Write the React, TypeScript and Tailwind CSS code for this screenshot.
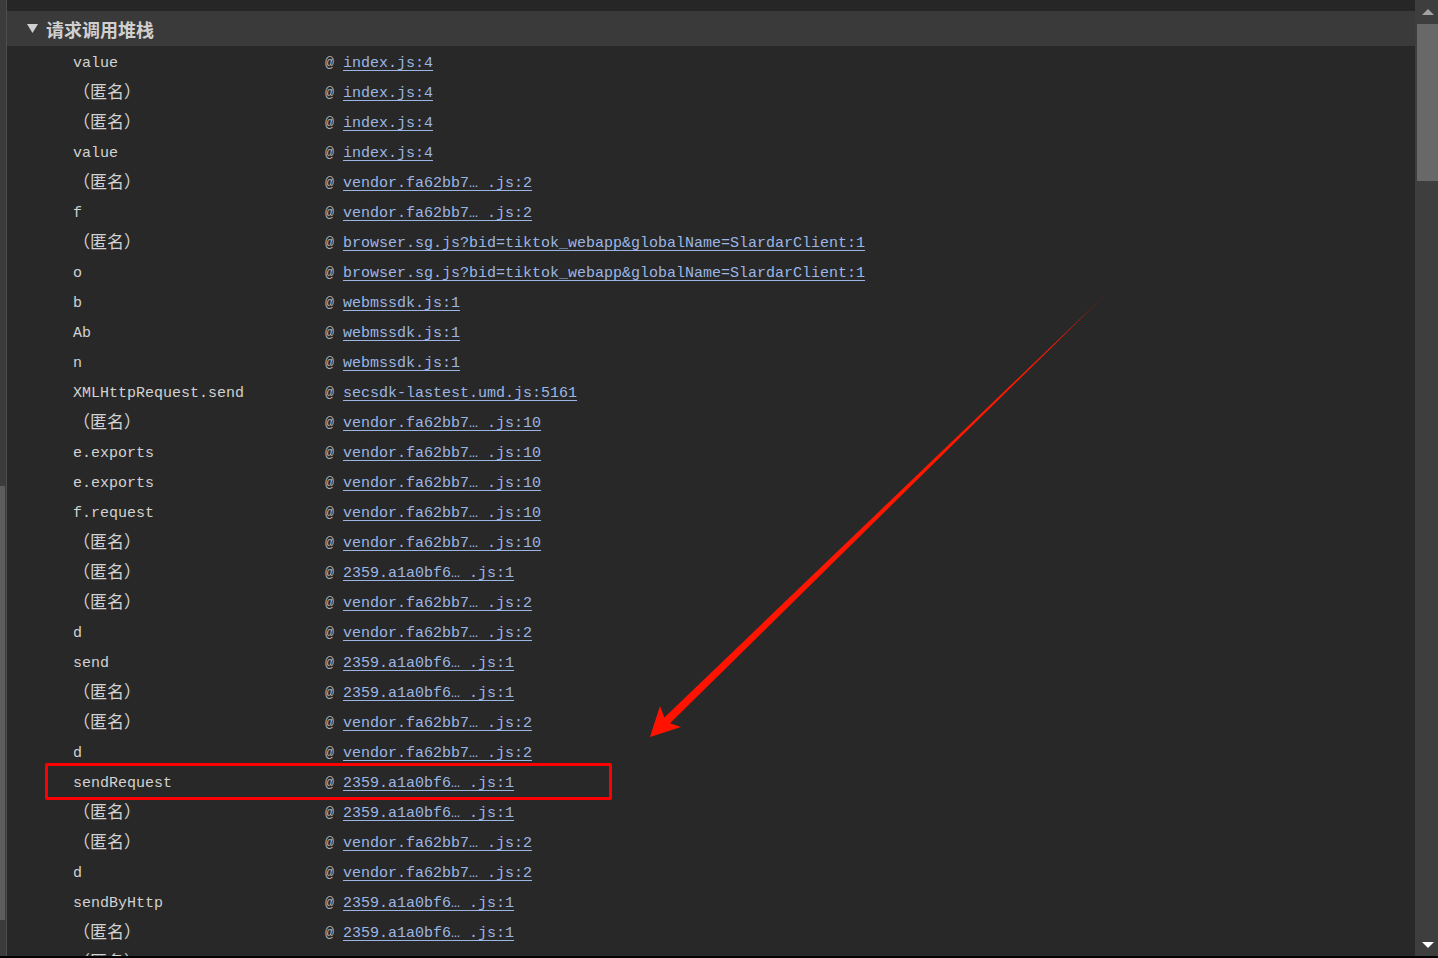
const ANON = '（匿名）'
const IDX = 'index.js:4'
const WEB = 'webmssdk.js:1'
const BROWSER = 'browser.sg.js?bid=tiktok_webapp&globalName=SlardarClient:1'

type Frame = {
  name: string
  file: string
}

const vendor = (line: string) => `vendor.fa62bb7….js:${line}`
const chunk = (line: string) => `2359.a1a0bf6….js:${line}`

const frames: Frame[] = [
  { name: 'value', file: IDX },
  { name: ANON, file: IDX },
  { name: ANON, file: IDX },
  { name: 'value', file: IDX },
  { name: ANON, file: vendor('2') },
  { name: 'f', file: vendor('2') },
  { name: ANON, file: BROWSER },
  { name: 'o', file: BROWSER },
  { name: 'b', file: WEB },
  { name: 'Ab', file: WEB },
  { name: 'n', file: WEB },
  { name: 'XMLHttpRequest.send', file: 'secsdk-lastest.umd.js:5161' },
  { name: ANON, file: vendor('10') },
  { name: 'e.exports', file: vendor('10') },
  { name: 'e.exports', file: vendor('10') },
  { name: 'f.request', file: vendor('10') },
  { name: ANON, file: vendor('10') },
  { name: ANON, file: chunk('1') },
  { name: ANON, file: vendor('2') },
  { name: 'd', file: vendor('2') },
  { name: 'send', file: chunk('1') },
  { name: ANON, file: chunk('1') },
  { name: ANON, file: vendor('2') },
  { name: 'd', file: vendor('2') },
  { name: 'sendRequest', file: chunk('1') },
  { name: ANON, file: chunk('1') },
  { name: ANON, file: vendor('2') },
  { name: 'd', file: vendor('2') },
  { name: 'sendByHttp', file: chunk('1') },
  { name: ANON, file: chunk('1') },
  { name: ANON, file: chunk('1') },
]

const mono = "font-['Liberation_Mono','Noto_Sans_CJK_SC',monospace]"

// the ellipsis is full width in the original font, so pad it out to two cells
function FileLink({ file }: { file: string }) {
  const parts = file.split('…')
  return (
    <a className="text-[#9cb6e4] underline underline-offset-[3px] decoration-1 cursor-pointer whitespace-nowrap">
      {parts[0]}
      {parts.length > 1 ? <><span className="tracking-[9px]">…</span>{parts[1]}</> : ''}
    </a>
  )
}

function FrameRow({ frame }: { frame: Frame }) {
  const anon = frame.name === ANON
  return (
    <div className="h-[30px] flex items-center">
      <div className={`w-[318px] pl-[66px] shrink-0 text-[#d2d2d2] whitespace-nowrap ${anon ? 'text-[17px]' : 'text-[15px]'}`}>
        {frame.name}
      </div>
      <div className="text-[15px] whitespace-nowrap">
        <span className="text-[#b4b4b4]">@ </span>
        <FileLink file={frame.file} />
      </div>
    </div>
  )
}

function Arrow() {
  return (
    <svg className="absolute left-0 top-0 pointer-events-none" width="1438" height="958" viewBox="0 0 1438 958">
      <defs>
        <linearGradient id="shaft" x1="1108" y1="292" x2="650" y2="737" gradientUnits="userSpaceOnUse">
          <stop offset="0" stopColor="#7a1a10" />
          <stop offset="0.12" stopColor="#ff1a00" />
          <stop offset="1" stopColor="#ff1200" />
        </linearGradient>
      </defs>
      <polygon points="1108,292 664.4,717.4 660,706 650,737 681,727 670,723.2" fill="url(#shaft)" />
    </svg>
  )
}

export default function App() {
  return (
    <div className={`relative w-[1438px] h-[958px] overflow-hidden bg-[#282828] flex ${mono}`}>
      {/* left pane edge */}
      <div className="w-[7px] shrink-0 bg-[#3b3b3b] border-r border-[#4d4d4d] flex flex-col">
        <div className="h-[486px]"></div>
        <div className="w-[5px] h-[434px] bg-[#5c5c5c]"></div>
      </div>

      <div className="flex-1 flex flex-col min-w-0">
        <div className="h-[11px] shrink-0 bg-[#262626]"></div>
        <div className="h-[35px] shrink-0 bg-[#3a3a3a] flex items-center pl-[20px] gap-[8px] text-[#d0d0d0]">
          <svg width="11" height="9" viewBox="0 0 11 9"><polygon points="0,0 11,0 5.5,9" fill="#d0d0d0" /></svg>
          <span className="text-[18px] font-bold font-['Noto_Sans_CJK_SC',sans-serif] leading-none">请求调用堆栈</span>
        </div>
        <div className="flex flex-col pt-[3px]">
          {frames.map((f, i) => <FrameRow key={i} frame={f} />)}
        </div>
      </div>

      {/* scrollbar */}
      <div className="w-[23px] shrink-0 bg-[#3e3e3e] flex flex-col items-end">
        <div className="h-[24px] w-full flex items-center justify-center pl-[2px]">
          <svg width="12" height="6" viewBox="0 0 12 6"><polygon points="6,0 12,6 0,6" fill="#a3a3a3" /></svg>
        </div>
        <div className="w-[21px] h-[157px] bg-[#686868]"></div>
        <div className="flex-1"></div>
        <div className="h-[16px] w-full flex justify-center pl-[2px]">
          <svg width="12" height="6" viewBox="0 0 12 6"><polygon points="0,0 12,0 6,6" fill="#ffffff" /></svg>
        </div>
      </div>

      <div className="absolute left-0 right-0 bottom-0 h-[2px] bg-black"></div>

      {/* annotation */}
      <div className="absolute left-[45px] top-[763px] w-[567px] h-[37px] border-[3px] border-[#ff0000] rounded-[2px] pointer-events-none"></div>
      <Arrow />
    </div>
  )
}
